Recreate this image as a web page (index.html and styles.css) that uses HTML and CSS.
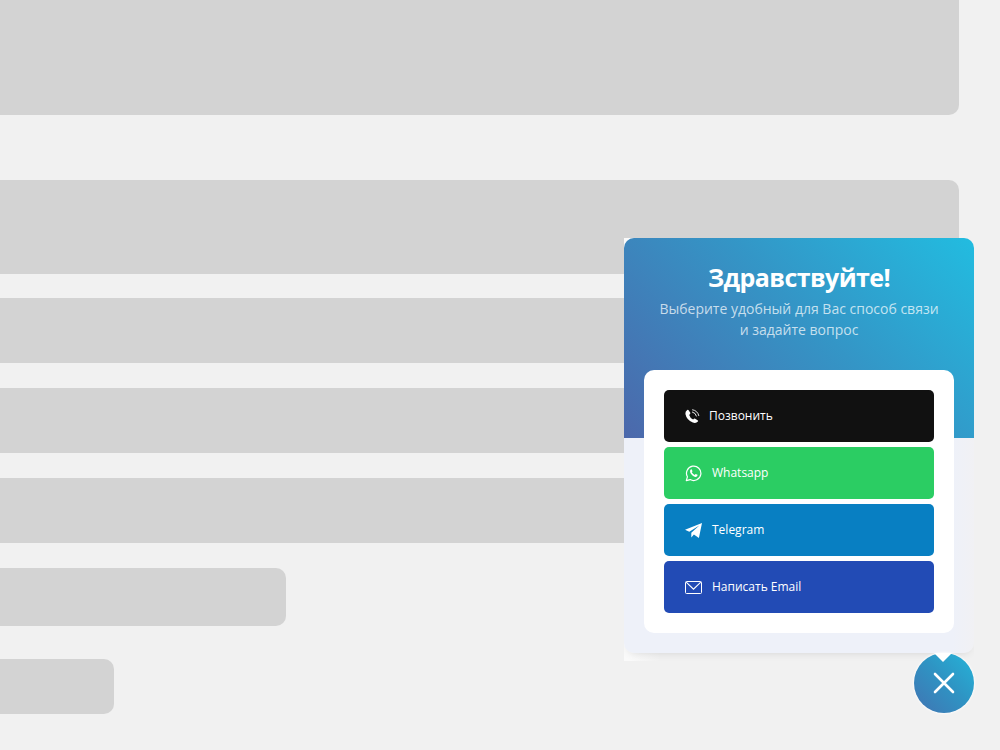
FILE: index.html
```html
<!DOCTYPE html>
<html lang="ru">

<head>
    <meta charset="UTF-8">
    <meta name="viewport" content="width=device-width, initial-scale=1.0">
    <title>Виджет связи</title>
    <link rel="stylesheet" href="styles.css">
</head>

<body>
    <!-- Page skeleton -->
    <div class="skeleton">
        <div class="block block-hero"></div>
        <div class="block block-title"></div>
        <div class="block block-row"></div>
        <div class="block block-row"></div>
        <div class="block block-row"></div>
        <div class="block block-short"></div>
        <div class="block block-button"></div>
    </div>

    <!-- Contact widget -->
    <div class="widget">
        <div class="panel-wrap">
            <div class="panel">
                <div class="panel-header">
                    <h2 class="heading">Здравствуйте!</h2>
                    <p class="text">Выберите удобный для Вас способ связи<br>и задайте вопрос</p>
                </div>
                <div class="links">
                    <a href="#" class="link link-phone">
                        <svg width="15" height="15" viewBox="0 0 15 15">
                            <path fill="#fff" d="M3.4 1.1 5.3 3.8Q5.6 4.5 5 5.1L4.2 5.9Q4.9 8.7 8.1 10.4L9 9.7Q9.6 9.3 10.2 9.7L12.9 11.4Q13.4 11.9 12.9 12.6 11 14.8 7.8 13.6 1.6 11 .4 5 .1 2.5 2.2 1 2.9.5 3.4 1.1Z" />
                            <path fill="none" stroke="#fff" stroke-width=".9" stroke-linecap="round" d="M7.6.8Q12.5 1.5 13.8 6.6M7.4 3Q10.8 3.8 11.4 7" />
                        </svg>
                        <span>Позвонить</span>
                    </a>
                    <a href="#" class="link link-whatsapp">
                        <svg width="18" height="18" viewBox="0 0 18 18">
                            <path fill="none" stroke="#fff" stroke-width="1.2" stroke-linejoin="round" d="M1.3 16.6 2.4 12.8A7.2 7.2 0 1 1 5.2 15.6Z" />
                            <path fill="#fff" d="M6.1 5.3 6.8 5.4 7.5 7.2 6.8 8.3Q7.8 10.1 9.6 10.9L10.7 9.9 12.6 10.8Q12.8 12.4 11 12.9 9.4 13.2 7.2 11.2 4.7 9 5 7 5.2 5.7 6.1 5.3Z" />
                        </svg>
                        <span>Whatsapp</span>
                    </a>
                    <a href="#" class="link link-telegram">
                        <svg width="18" height="18" viewBox="0 0 18 18">
                            <path fill="#fff" d="M17 2 0 8.8 4.3 10.7 14.3 4.6 6.3 11.8V16.4L8.9 13.4 13.9 17Z" />
                        </svg>
                        <span>Telegram</span>
                    </a>
                    <a href="#" class="link link-email">
                        <svg width="18" height="18" viewBox="0 0 18 18">
                            <rect x=".5" y="3.5" width="16" height="12" rx="1" fill="none" stroke="#fff" stroke-width="1" />
                            <path fill="none" stroke="#fff" stroke-width="1.1" d="M1.2 4.1 8.5 11.2 15.8 4.1" />
                        </svg>
                        <span>Написать Email</span>
                    </a>
                </div>
            </div>
        </div>
        <button class="close" aria-label="Закрыть">
            <svg width="22" height="22" viewBox="0 0 22 22">
                <path fill="none" stroke="#fff" stroke-width="2.6" stroke-linecap="round" d="M2 2 20 20M20 2 2 20" />
            </svg>
        </button>
    </div>
</body>

</html>
```

FILE: styles.css
```css
* {
    box-sizing: border-box;
}

body {
    margin: 0;
    height: 750px;
    overflow: hidden;
    position: relative;
    background: #f1f1f1;
    font-family: "Open Sans", sans-serif;
}

.block {
    width: 959px;
    background: #d3d3d3;
    border-radius: 0 10px 10px 0;
}

.block-hero {
    height: 115px;
    margin-bottom: 65px;
    border-radius: 0 0 10px 0;
}

.block-title {
    height: 94px;
    margin-bottom: 24px;
}

.block-row {
    height: 65px;
    margin-bottom: 25px;
}

.block-short {
    width: 286px;
    height: 58px;
    margin-bottom: 33px;
}

.block-button {
    width: 114px;
    height: 55px;
}

.widget {
    position: absolute;
    right: 26px;
    bottom: 37px;
    width: 350px;
    display: flex;
    flex-direction: column;
    align-items: flex-end;
}

.panel-wrap {
    width: 100%;
    height: 423px;
    margin-bottom: -8px;
    overflow: hidden;
    background: linear-gradient(to right, #fafafa 6px, transparent 36px);
    background-size: 36px 100%;
    background-repeat: no-repeat;
}

.panel {
    height: 415px;
    padding: 0 20px;
    border-radius: 10px;
    background: linear-gradient(45deg, #4c68ab, #3495c6 55%, #22bce0) top / 100% 200px no-repeat, linear-gradient(to right, #eef1f9 94%, #f1f1f4);
    box-shadow: 0 4px 8px -4px rgba(0, 0, 0, 0.12);
}

.panel-header {
    height: 132px;
    padding-top: 22px;
    text-align: center;
    color: #fff;
}

.heading {
    margin: 0;
    font-size: 25px;
    line-height: 34px;
    font-weight: 700;
    letter-spacing: -0.6px;
}

.text {
    margin: 4px 0 0;
    font-size: 14px;
    line-height: 21px;
    color: rgba(255, 255, 255, 0.72);
}

.links {
    display: flex;
    flex-direction: column;
    gap: 5px;
    padding: 20px;
    background: #fff;
    border-radius: 10px;
}

.link {
    display: flex;
    align-items: center;
    gap: 9px;
    height: 52px;
    padding: 0 20px 0 21px;
    border-radius: 5px;
    color: #fff;
    font-size: 12px;
    line-height: 18px;
    text-decoration: none;
}

.link svg {
    flex: none;
}

.link-phone {
    background: #111;
}

.link-whatsapp {
    background: #2bcd63;
}

.link-telegram {
    background: #087fc2;
}

.link-email {
    background: #224bb5;
}

.close {
    position: relative;
    display: flex;
    align-items: center;
    justify-content: center;
    width: 60px;
    height: 60px;
    padding: 0;
    border: 0;
    border-radius: 50%;
    background: linear-gradient(45deg, #4173b2, #2e95c4 55%, #25b4d9);
    box-shadow: 0 0 2px 1px rgba(255, 255, 255, 0.7);
}

/* panel tail over the button */
.close::before {
    content: "";
    position: absolute;
    top: 0;
    left: 20px;
    border: 9px solid transparent;
    border-top-color: #fff;
    border-bottom: 0;
}
```
